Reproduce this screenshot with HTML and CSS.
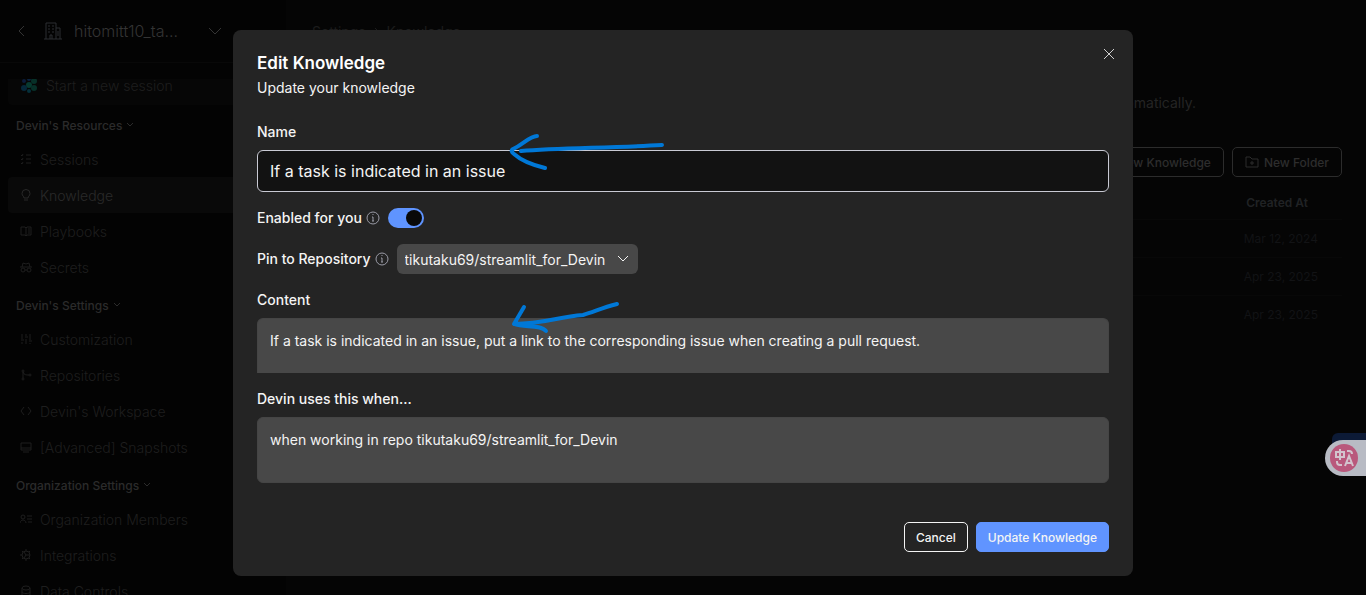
FILE: index.html
```html
<!DOCTYPE html>
<html lang="en">
<head>
  <meta charset="UTF-8">
  <meta name="viewport" content="width=device-width, initial-scale=1.0">
  <title>Edit Knowledge</title>
  <link rel="stylesheet" href="styles.css">
</head>
<body>

  <!-- Sidebar -->
  <aside class="sidebar">
    <div class="org">
      <svg class="back" width="8" height="12" viewBox="0 0 8 12"><path d="M7 1L2 6l5 5"/></svg>
      <svg class="building" width="18" height="18" viewBox="0 0 18 18"><path d="M0 17h18M2 17V1h10v16M12 6h4v11M6 17v-4h2v4M4 4h2M8 4h2M4 7h2M8 7h2M4 10h2M8 10h2M14 9v5"/></svg>
      <span class="org-name">hitomitt10_ta...</span>
      <svg width="14" height="8" viewBox="0 0 14 8"><path d="M1 1l6 6 6-6"/></svg>
    </div>

    <nav class="menu">
      <div class="menu-scroll">
        <a href="#" class="item start">
          <svg class="logo" width="16" height="16" viewBox="0 0 16 16">
            <circle cx="3" cy="4" r="2" fill="#0b1c3a"/>
            <circle cx="8" cy="2" r="2" fill="#0b2340"/>
            <circle cx="13" cy="4" r="3" fill="#073028"/>
            <circle cx="8" cy="8" r="3" fill="#073a30"/>
            <circle cx="3" cy="11" r="3" fill="#05283a"/>
            <circle cx="13" cy="11" r="3" fill="#073028"/>
            <circle cx="8" cy="14" r="2" fill="#05303a"/>
          </svg>
          Start a new session
        </a>

        <h3>Devin's Resources <svg width="6" height="4" viewBox="0 0 6 4"><path d="M0 0l3 3 3-3"/></svg></h3>
        <a href="#" class="item">
          <svg width="12" height="12" viewBox="0 0 12 12"><path d="M1 2l1 1 1-2M1 6l1 1 1-2M1 10l1 1 1-2M6 2h5M6 6h5M6 10h5"/></svg>
          Sessions
        </a>
        <a href="#" class="item active">
          <svg width="12" height="12" viewBox="0 0 12 12"><path d="M4 9C4 7 2 7 2 4.500a4 4 0 0 1 8 0C10 7 8 7 8 9zM4 11h4"/></svg>
          Knowledge
        </a>
        <a href="#" class="item">
          <svg width="12" height="12" viewBox="0 0 12 12"><path d="M6 3v8M6 3L5 2H1v8h4l1 1 1-1h4V2H7zM8 4h2M8 6h2M8 8h2"/></svg>
          Playbooks
        </a>
        <a href="#" class="item">
          <svg width="12" height="12" viewBox="0 0 12 12"><path d="M0 6h12M2 6l1-4 3 1 3-1 1 4M5 9h2"/><circle cx="3" cy="9" r="2"/><circle cx="9" cy="9" r="2"/></svg>
          Secrets
        </a>

        <h3>Devin's Settings <svg width="6" height="4" viewBox="0 0 6 4"><path d="M0 0l3 3 3-3"/></svg></h3>
        <a href="#" class="item">
          <svg width="12" height="12" viewBox="0 0 12 12"><path d="M2 1v5M2 9v2M1 7h3M6 1v2M6 6v5M5 4h3M10 1v6M10 10v1M9 8h3"/></svg>
          Customization
        </a>
        <a href="#" class="item">
          <svg width="12" height="12" viewBox="0 0 12 12"><circle cx="3" cy="2" r="1"/><circle cx="3" cy="10" r="1"/><circle cx="10" cy="6" r="1"/><path d="M3 3v6M3 3c1 3 3 3 6 3"/></svg>
          Repositories
        </a>
        <a href="#" class="item">
          <svg width="12" height="12" viewBox="0 0 12 12"><path d="M4 2L1 6l3 4M8 2l3 4-3 4"/></svg>
          Devin's Workspace
        </a>
        <a href="#" class="item">
          <svg width="12" height="12" viewBox="0 0 12 12"><path d="M1 2h10v7H1zM1 7h10M3 11h6"/></svg>
          [Advanced] Snapshots
        </a>

        <h3>Organization Settings <svg width="6" height="4" viewBox="0 0 6 4"><path d="M0 0l3 3 3-3"/></svg></h3>
        <a href="#" class="item">
          <svg width="12" height="12" viewBox="0 0 12 12"><circle cx="3" cy="4" r="2"/><path d="M0 10c0-4 6-4 6 0M7 3h5M7 6h5M8 9h4"/></svg>
          Organization Members
        </a>
        <a href="#" class="item">
          <svg width="12" height="12" viewBox="0 0 12 12"><circle cx="6" cy="6" r="4"/><path d="M6 6h4M6 6L4 3M6 6L4 9M6 0v2M6 10v2M0 6h2M2 2l1 1M10 2L9 3M2 10l1-1M10 10L9 9"/></svg>
          Integrations
        </a>
        <a href="#" class="item">
          <svg width="12" height="12" viewBox="0 0 12 12"><ellipse cx="6" cy="3" rx="4" ry="2"/><path d="M2 3v7c0 2 8 2 8 0V3M2 7c0 2 8 2 8 0"/></svg>
          Data Controls
        </a>
      </div>
    </nav>
  </aside>

  <!-- Knowledge page -->
  <main class="page">
    <div class="crumbs">Settings <svg width="5" height="8" viewBox="0 0 5 8"><path d="M1 1l3 3-3 3"/></svg> Knowledge</div>
    <p class="intro">automatically.</p>
    <div class="actions">
      <button type="button">New Knowledge</button>
      <button type="button">
        <svg width="14" height="12" viewBox="0 0 14 12"><path d="M1 1h4l2 2h6v8H1zM7 5v4M5 7h4"/></svg>
        New Folder
      </button>
    </div>
    <table class="list">
      <thead>
        <tr><th>Created At</th></tr>
      </thead>
      <tbody>
        <tr><td>Mar 12, 2024</td></tr>
        <tr><td>Apr 23, 2025</td></tr>
        <tr><td>Apr 23, 2025</td></tr>
      </tbody>
    </table>
  </main>

  <!-- Translate widget -->
  <div class="widget">
    <div class="pill">
      <svg width="28" height="28" viewBox="0 0 28 28">
        <circle cx="14" cy="14" r="14" fill="#b9587c" stroke="none"/>
        <path d="M6 8h8v5H6zM10 5v11M17 7h2q3 0 3 3M7 17v1q0 3 3 3h2M15 22l4-10 4 10M16 19h6" stroke="#d3c3cd" stroke-width="2"/>
      </svg>
    </div>
  </div>

  <!-- Edit dialog -->
  <div class="overlay">
    <form class="dialog" role="dialog" aria-labelledby="title">
      <button type="button" class="close" aria-label="Close">
        <svg width="12" height="12" viewBox="0 0 12 12"><path d="M1 1l10 10M11 1L1 11"/></svg>
      </button>
      <h2 id="title">Edit Knowledge</h2>
      <p class="sub">Update your knowledge</p>

      <div class="field">
        <label for="name">Name</label>
        <input type="text" id="name" class="name" value="If a task is indicated in an issue">
        <svg class="arrow arrow-name" width="160" height="42" viewBox="0 0 160 42"><path d="M29 6C22 6 14 15 5 19Q2 21 6 24Q16 33 37 38M13 21C50 18 100 18 154 15"/></svg>
      </div>

      <div class="row">
        <label for="enabled">Enabled for you</label>
        <svg class="info" width="14" height="14" viewBox="0 0 14 14"><circle cx="7" cy="7" r="6"/><path d="M6 6h1v4M6 10h2M7 3v1"/></svg>
        <input type="checkbox" id="enabled" class="toggle" checked>
      </div>

      <div class="row">
        <label for="repo">Pin to Repository</label>
        <svg class="info" width="14" height="14" viewBox="0 0 14 14"><circle cx="7" cy="7" r="6"/><path d="M6 6h1v4M6 10h2M7 3v1"/></svg>
        <div class="select">
          <select id="repo">
            <option>tikutaku69/streamlit_for_Devin</option>
          </select>
          <svg width="12" height="8" viewBox="0 0 12 8"><path d="M1 1l5 5 5-5"/></svg>
        </div>
      </div>

      <div class="field">
        <label for="content">Content</label>
        <textarea id="content" class="content">If a task is indicated in an issue, put a link to the corresponding issue when creating a pull request.</textarea>
        <svg class="arrow arrow-content" width="114" height="36" viewBox="0 0 114 36"><path d="M15 7L5 24C35 24 48 17 74 15C85 12 92 8 108 4M5 24C15 28 31 24 37 31"/></svg>
      </div>

      <div class="field">
        <label for="trigger">Devin uses this when...</label>
        <textarea id="trigger" class="trigger">when working in repo tikutaku69/streamlit_for_Devin</textarea>
      </div>

      <div class="buttons">
        <button type="button" class="cancel">Cancel</button>
        <button type="submit" class="update">Update Knowledge</button>
      </div>
    </form>
  </div>

</body>
</html>
```
FILE: styles.css
```css
* { box-sizing: border-box; }
body {
  font-family: Inter, "Liberation Sans", sans-serif;
  font-size: 14px;
  margin: 0;
  height: 100vh;
  overflow: hidden;
  display: flex;
  background: #050505;
  color: #f4f4f4;
}
button, input, select, textarea {
  font-family: inherit;
  color: inherit;
}
svg {
  fill: none;
  stroke: currentColor;
  flex: none;
}
h2, h3, p { margin: 0; }

/* Sidebar */
.sidebar {
  width: 286px;
  flex: none;
  display: flex;
  flex-direction: column;
  background: #030303;
  color: #1e1e1e;
  font-weight: 300;
}
.org {
  display: flex;
  align-items: center;
  height: 63px;
  padding: 0 64px 0 17px;
  border-bottom: 1px solid #080808;
  color: #343434;
  font-size: 16px;
}
.back { margin-right: 19px; }
.building { margin-right: 12px; color: #2c2f33; }
.org-name { flex: 1; }
.menu {
  flex: 1;
  min-height: 0;
  margin-top: 16px;
  overflow: hidden;
}
/* list is scrolled down a little */
.menu-scroll { margin-top: -14px; }
.menu h3 {
  display: flex;
  align-items: center;
  gap: 5px;
  height: 36px;
  padding: 4px 16px 0;
  font-size: 12px;
  font-weight: 500;
  color: #2b2b2b;
}
.item {
  display: flex;
  align-items: center;
  gap: 8px;
  height: 36px;
  margin: 0 8px;
  padding: 0 12px;
  border-radius: 4px;
  color: inherit;
  text-decoration: none;
}
.item.start {
  gap: 9px;
  height: 40px;
  padding: 0 13px;
  background: #060606;
}
.item.active {
  background: #090909;
  color: #292929;
}
.logo { stroke: none; }

/* Knowledge page */
.page {
  flex: 1;
  padding: 20px 24px 0 26px;
  color: #242424;
}
.crumbs {
  display: flex;
  align-items: center;
  gap: 8px;
  height: 22px;
  color: #1c1c1c;
}
.intro {
  margin: 51px 146px 0 0;
  line-height: 20px;
  text-align: right;
}
.actions {
  display: flex;
  justify-content: flex-end;
  gap: 8px;
  margin-top: 34px;
}
.actions button {
  display: flex;
  align-items: center;
  gap: 5px;
  height: 30px;
  padding: 0 12px;
  font-size: 12px;
  font-weight: 500;
  background: none;
  border: 1px solid #2c2c2c;
  border-radius: 5px;
  color: #2d2d2d;
}
.list {
  width: 100%;
  margin-top: 9px;
  border-collapse: collapse;
  font-size: 12px;
}
.list th, .list td {
  height: 38px;
  padding: 0 24px 0 0;
  text-align: right;
  border-bottom: 1px solid #080808;
}
.list th {
  height: 33px;
  padding-right: 34px;
  font-weight: 600;
  color: #202224;
}
.list td { color: #121315; }
.list tr:last-child td { border-bottom: none; }

/* Translate widget */
.widget {
  position: fixed;
  right: 0;
  top: 433px;
  width: 41px;
  padding-top: 7px;
}
.widget::before {
  content: "";
  position: absolute;
  right: 0;
  top: 0;
  width: 34px;
  height: 24px;
  background: #0c1a36;
  border-radius: 6px 0 0 0;
}
.pill {
  position: relative;
  padding: 4px 5px;
  background: #b8bbc4;
  border-radius: 18px 0 0 18px;
}
.pill svg { display: block; }

/* Dialog */
.overlay {
  position: fixed;
  inset: 0;
  display: flex;
  justify-content: center;
  align-items: flex-start;
  padding-top: 30px;
  pointer-events: none;
}
.dialog {
  position: relative;
  width: 900px;
  max-width: 100%;
  padding: 24px;
  background: #242424;
  border-radius: 8px;
  pointer-events: auto;
}
.close {
  position: absolute;
  top: 18px;
  right: 18px;
  display: flex;
  padding: 0;
  background: none;
  border: none;
  color: #d0d0d0;
}
.dialog h2 {
  font-size: 17px;
  line-height: 18px;
  font-weight: 600;
  color: #fff;
}
.sub {
  margin: 6px 0 24px;
  line-height: 20px;
}
.field {
  position: relative;
  margin-bottom: 16px;
}
.dialog label {
  display: block;
  line-height: 20px;
  font-weight: 500;
}
.name, .field textarea {
  display: block;
  width: 100%;
  margin-top: 8px;
  padding: 0 12px;
  border: 1px solid #454545;
  border-radius: 6px;
  outline: none;
}
.name {
  height: 42px;
  font-size: 16px;
  background: #121212;
  border-color: #c9cad4;
}
.field textarea {
  padding: 12px;
  font-size: 14px;
  line-height: 20px;
  resize: none;
  overflow: hidden;
  background: #484848;
}
.field .content {
  height: 55px;
  border-bottom: none;
  border-radius: 6px 6px 0 0;
}
.field .trigger { height: 66px; }
.row {
  display: flex;
  align-items: center;
  margin-bottom: 16px;
}
.info {
  margin: 0 8px 0 4px;
  color: #9a9ba6;
}
.toggle {
  appearance: none;
  width: 36px;
  height: 20px;
  margin: 0;
  padding: 2px;
  border-radius: 10px;
  background: #5f94ff;
}
.toggle::before {
  content: "";
  display: block;
  width: 16px;
  height: 16px;
  margin-left: 16px;
  border-radius: 50%;
  background: #090909;
}
.select {
  display: grid;
  align-items: center;
}
.select select, .select svg { grid-area: 1 / 1; }
.select select {
  appearance: none;
  height: 30px;
  padding: 0 32px 0 8px;
  font-size: 14px;
  background: #484848;
  border: none;
  border-radius: 6px;
}
.select svg {
  justify-self: end;
  margin-right: 9px;
  pointer-events: none;
}
.buttons {
  display: flex;
  justify-content: flex-end;
  gap: 8px;
  margin-top: 39px;
}
.buttons button {
  height: 30px;
  padding: 0 11px;
  font-size: 12px;
  font-weight: 500;
  border: 1px solid #f4f4f4;
  border-radius: 5px;
  background: none;
}
.buttons .update {
  background: #6094ff;
  border-color: #6094ff;
}

/* Hand drawn arrows */
.arrow {
  position: absolute;
  stroke: #0078d7;
  stroke-width: 4;
  stroke-linecap: round;
  stroke-linejoin: round;
  pointer-events: none;
}
.arrow-name { left: 251px; top: 8px; }
.arrow-content { left: 252px; top: 10px; }
```
